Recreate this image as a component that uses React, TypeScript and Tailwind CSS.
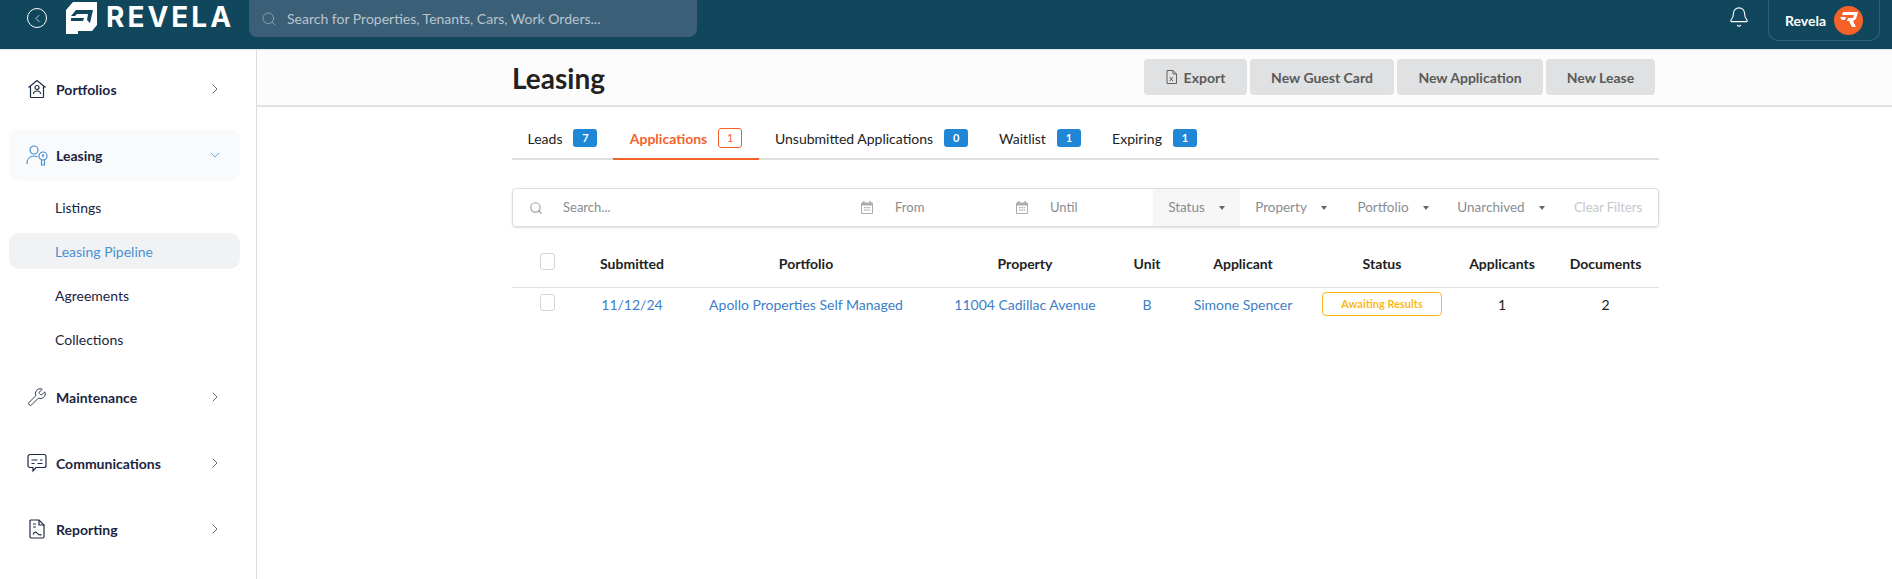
import { Bell, ChevronDown, ChevronLeft, ChevronRight, Search, Wrench } from "lucide-react";

function Logo() {
  return (
    <svg width="31" height="32" viewBox="0 0 31 32" className="shrink-0">
      <path fill="#fff" d="M7 0H31V23L26 29H12V32H0V8Z" />
      <path fill="#10475d" d="M5 14 10 8H27L24 21 21 18 22 12H11L9 14Z" />
      <path fill="#10475d" d="M5 16H18L17 19H5Z" />
    </svg>
  );
}

function Mark() {
  return (
    <span className="w-[29px] h-[29px] rounded-full bg-[#f4622a] flex items-center justify-center">
      <svg width="20" height="18" viewBox="0 0 20 18">
        <path fill="#fff" d="M4 1H19L17 8 14 10 17 16H13L10 10H8L9 7H14L15 4H3Z" />
        <path fill="#fff" d="M1 6H7L6 9H3Z" />
      </svg>
    </span>
  );
}

function HomeIcon() {
  return (
    <svg width="20" height="20" viewBox="0 0 20 20" fill="none" stroke="#1f2a44" strokeWidth="1.2">
      <path d="M1.5 8.5 10 1.5l8.5 7M3.5 7.5V18a.5.5 0 0 0 .5.5h12a.5.5 0 0 0 .5-.5V7.5" />
      <circle cx="10" cy="8.5" r="2" />
      <path d="M6.5 15c0-2 1.5-3 3.5-3s3.5 1 3.5 3" />
    </svg>
  );
}

function KeyUserIcon() {
  return (
    <svg width="22" height="21" viewBox="0 0 22 21" fill="none" stroke="#4a90d2" strokeWidth="1.2">
      <circle cx="8" cy="5" r="4" />
      <path d="M1 19c0-5 3-8 7-8 1.500 0 2.500.3 3.500 1" />
      <circle cx="17" cy="11" r="4" />
      <path d="M15.500 14.500V20h3v-5.500" />
      <circle cx="17" cy="10.500" r=".6" />
    </svg>
  );
}

function ChatIcon() {
  return (
    <svg width="20" height="20" viewBox="0 0 20 20" fill="none" stroke="#1f2a44" strokeWidth="1.2">
      <path d="M3 1.500h14a2 2 0 0 1 2 2v9a2 2 0 0 1-2 2H9l-3 3.500v-3.500H3a2 2 0 0 1-2-2v-9a2 2 0 0 1 2-2Z" />
      <path d="M4.500 7h6M13 7h2.500M4.500 10.500h3M10.500 10.500h5" />
    </svg>
  );
}

function ReportIcon() {
  return (
    <svg width="18" height="20" viewBox="0 0 18 20" fill="none" stroke="#1f2a44" strokeWidth="1.2">
      <path d="M3 1h8l5 5v11.500a1.500 1.500 0 0 1-1.500 1.500h-11.500A1.500 1.500 0 0 1 2 17.500V2a1 1 0 0 1 1-1Z" />
      <path d="M5 5h3M5 8h3M11 1v5h5M5 15.500c1.500-3 3-3 4.500-1s2.500 1.500 4 1" />
    </svg>
  );
}

function CalendarIcon() {
  return (
    <svg width="12" height="13" viewBox="0 0 12 13" fill="#a9abad" className="shrink-0">
      <path d="M2 0h1.500v2H2zM8.500 0H10v2H8.500z" />
      <path d="M1 1.500h10a1 1 0 0 1 1 1V12a1 1 0 0 1-1 1H1a1 1 0 0 1-1-1V2.500a1 1 0 0 1 1-1Zm0 3V12h10V4.500Z" fillRule="evenodd" />
      <path d="M3 6h1.500v1.200H3zM5.300 6h1.500v1.200H5.300zM7.600 6h1.500v1.200H7.600zM3 8.500h1.500v1.200H3zM5.300 8.500h1.500v1.200H5.300zM7.600 8.500h1.500v1.200H7.600z" />
    </svg>
  );
}

function ExcelIcon() {
  return (
    <svg width="11" height="14" viewBox="0 0 11 14" fill="none" stroke="#555" strokeWidth="0.9" className="mr-[7px]">
      <path d="M1 .5h6l3.500 3.500v9.500H1Z" />
      <path d="M7 .5V4h3.500M3.800 7l3 4M6.800 7l-3 4" />
    </svg>
  );
}

function Nav({ icon, label, open }: { icon: React.ReactNode; label: string; open?: boolean }) {
  return (
    <div
      className={`ml-[9px] mr-[16px] h-[52px] rounded-[10px] pl-[13px] pr-[17px] flex items-center ${
        open ? "bg-[#f9fafb]" : ""
      }`}
    >
      <span className="w-[29px] flex justify-center mr-[5px]">{icon}</span>
      <span className="flex-1 text-[14px] font-bold text-[#1b2440]">{label}</span>
      {open ? (
        <ChevronDown size={16} strokeWidth={1.2} className="text-[#4a90d2]" />
      ) : (
        <ChevronRight size={16} strokeWidth={1.2} className="text-[#3a4256]" />
      )}
    </div>
  );
}

function SubNav({ label, active }: { label: string; active?: boolean }) {
  return (
    <div
      className={`ml-[9px] mr-[16px] h-[36px] rounded-[10px] pl-[46px] flex items-center text-[14px] ${
        active ? "bg-[#f1f2f4] text-[#4a90d2]" : "text-[#1b2440]"
      }`}
    >
      {label}
    </div>
  );
}

function Tab({ label, count, active, width }: { label: string; count: number; active?: boolean; width: string }) {
  return (
    <div
      className={`${width} h-[48px] pt-[6px] flex items-center justify-center gap-[11px] text-[14px] border-b-[2px] ${
        active ? "border-[#f4622a] text-[#f4622a] font-bold" : "border-transparent text-[#222]"
      }`}
    >
      {label}
      <span
        className={`w-[24px] rounded-[3px] flex items-center justify-center text-[11px] ${
          active
            ? "h-[20px] border border-[#f4622a] text-[#f4622a] font-normal"
            : "h-[18px] bg-[#1f87d6] text-white font-bold"
        }`}
      >
        {count}
      </span>
    </div>
  );
}

function Filter({ label, width, active }: { label: string; width: string; active?: boolean }) {
  return (
    <div
      className={`${width} h-full flex items-center justify-center gap-[14px] text-[13.5px] text-[#8a8d90] ${
        active ? "bg-[#f6f6f6]" : ""
      }`}
    >
      {label}
      <span className="w-0 h-0 border-x-[3.500px] border-x-transparent border-t-[4px] border-t-[#666]" />
    </div>
  );
}

function Btn({ children, width }: { children: React.ReactNode; width: string }) {
  return (
    <button
      type="button"
      className={`${width} h-[36px] rounded-[4px] bg-[#e0e1e2] text-[14px] font-bold text-[#5a5a5a] flex items-center justify-center`}
    >
      {children}
    </button>
  );
}

function Check() {
  return <span className="block w-[15px] h-[17px] mx-auto rounded-[3px] border border-[#d4d4d5] bg-white" />;
}

const columns = ["Submitted", "Portfolio", "Property", "Unit", "Applicant", "Status", "Applicants", "Documents"];

export default function App() {
  return (
    <div
      className="h-[579px] w-[1892px] overflow-hidden flex flex-col bg-white"
      style={{ fontFamily: "Lato, 'Liberation Sans', sans-serif" }}
    >
      {/* top bar */}
      <header className="h-[50px] shrink-0 bg-[#10475d] border-b border-[#dfe7ea] flex items-start">
        <div className="w-[66px] h-[36px] flex items-center justify-end pr-[19px]">
          <span className="w-[20px] h-[20px] rounded-full border border-white flex items-center justify-center">
            <ChevronLeft size={13} strokeWidth={1.3} className="text-white" />
          </span>
        </div>
        <div className="mt-[2px]">
          <Logo />
        </div>
        <span
          className="ml-[9px] w-[143px] h-[33px] flex items-center text-[28px] font-bold tracking-[3px] text-white"
          style={{ fontFamily: "Inter, sans-serif" }}
        >
          REVELA
        </span>
        <div className="w-[448px] h-[37px] rounded-b-[8px] bg-[#3c5f78] flex items-center pl-[12px] text-[14px] text-[#b9c5ce]">
          <Search size={16} strokeWidth={1} className="text-[#aebcc6] mr-[10px]" />
          Search for Properties, Tenants, Cars, Work Orders...
        </div>
        <div className="flex-1" />
        <Bell size={22} strokeWidth={1.2} className="text-white mt-[6px] mr-[18px]" />
        <div className="w-[112px] h-[41px] mr-[12px] rounded-b-[10px] border border-t-0 border-[#31617a] flex items-center justify-end pr-[16px] gap-[8px]">
          <span className="text-[14px] font-bold text-white">Revela</span>
          <Mark />
        </div>
      </header>

      <div className="flex-1 flex min-h-0">
        {/* sidebar */}
        <aside className="w-[257px] shrink-0 border-r border-[#dcdcdc] pt-[13px]">
          <Nav icon={<HomeIcon />} label="Portfolios" />
          <div className="h-[14px]" />
          <Nav icon={<KeyUserIcon />} label="Leasing" open />
          <div className="h-[8px]" />
          <SubNav label="Listings" />
          <div className="h-[8px]" />
          <SubNav label="Leasing Pipeline" active />
          <div className="h-[8px]" />
          <SubNav label="Agreements" />
          <div className="h-[8px]" />
          <SubNav label="Collections" />
          <div className="h-[14px]" />
          <Nav icon={<Wrench size={20} strokeWidth={1.1} className="text-[#1f2a44]" />} label="Maintenance" />
          <div className="h-[14px]" />
          <Nav icon={<ChatIcon />} label="Communications" />
          <div className="h-[14px]" />
          <Nav icon={<ReportIcon />} label="Reporting" />
        </aside>

        {/* main */}
        <main className="flex-1 min-w-0">
          <div className="h-[57px] bg-[#fcfcfc] border-b-[2px] border-[#e3e3e3] pl-[255px] pr-[237px] flex items-center justify-between">
            <h1 className="text-[28px] font-bold text-[#222]">Leasing</h1>
            <div className="flex gap-[3px] -mt-[1px]">
              <Btn width="w-[103px]">
                <ExcelIcon />
                Export
              </Btn>
              <Btn width="w-[144px]">New Guest Card</Btn>
              <Btn width="w-[146px]">New Application</Btn>
              <Btn width="w-[109px]">New Lease</Btn>
            </div>
          </div>

          <div className="w-[1147px] ml-[255px]">
            <div className="mt-[5px] flex border-b-[2px] border-[#dedede] h-[48px]">
              <Tab label="Leads" count={7} width="w-[101px]" />
              <Tab label="Applications" count={1} active width="w-[146px]" />
              <Tab label="Unsubmitted Applications" count={0} width="w-[225px]" />
              <Tab label="Waitlist" count={1} width="w-[112px]" />
              <Tab label="Expiring" count={1} width="w-[117px]" />
            </div>

            <div className="mt-[28px] h-[39px] rounded-[4px] border border-[#dddddd] shadow-[0_1px_2px_rgba(34,36,38,0.15)] flex items-center text-[13px] text-[#8a8d90]">
              <Search size={14} strokeWidth={2} className="ml-[16px] text-[#a0a0a0]" />
              <span className="ml-[20px] w-[298px]">Search...</span>
              <CalendarIcon />
              <span className="ml-[22px] w-[121px]">From</span>
              <CalendarIcon />
              <span className="ml-[22px] w-[103px]">Until</span>
              <Filter label="Status" width="w-[87px]" active />
              <Filter label="Property" width="w-[102px]" />
              <Filter label="Portfolio" width="w-[102px]" />
              <Filter label="Unarchived" width="w-[114px]" />
              <span className="flex-1 text-center text-[#c6c8ca]">Clear Filters</span>
            </div>

            <table className="mt-[20px] w-full table-fixed text-[14px]">
              <colgroup>
                <col className="w-[70px]" />
                <col className="w-[100px]" />
                <col className="w-[248px]" />
                <col className="w-[190px]" />
                <col className="w-[54px]" />
                <col className="w-[138px]" />
                <col className="w-[140px]" />
                <col className="w-[100px]" />
                <col className="w-[107px]" />
              </colgroup>
              <thead>
                <tr className="h-[40px] border-b border-[#e0e0e0]">
                  <th className="font-normal pb-[10px]">
                    <Check />
                  </th>
                  {columns.map((c) => (
                    <th key={c} className="font-bold text-[#222] text-center pb-[6px]">
                      {c}
                    </th>
                  ))}
                </tr>
              </thead>
              <tbody>
                <tr className="h-[34px] text-center text-[#3b7fc9]">
                  <td className="pb-[3px]">
                    <Check />
                  </td>
                  <td>11/12/24</td>
                  <td>Apollo Properties Self Managed</td>
                  <td>11004 Cadillac Avenue</td>
                  <td>B</td>
                  <td>Simone Spencer</td>
                  <td>
                    <span className="mx-auto w-[120px] h-[24px] rounded-[4px] border border-[#fdb913] text-[#fdb913] text-[11px] font-bold flex items-center justify-center">
                      Awaiting Results
                    </span>
                  </td>
                  <td className="text-[#222]">1</td>
                  <td className="text-[#222]">2</td>
                </tr>
              </tbody>
            </table>
          </div>
        </main>
      </div>
    </div>
  );
}
